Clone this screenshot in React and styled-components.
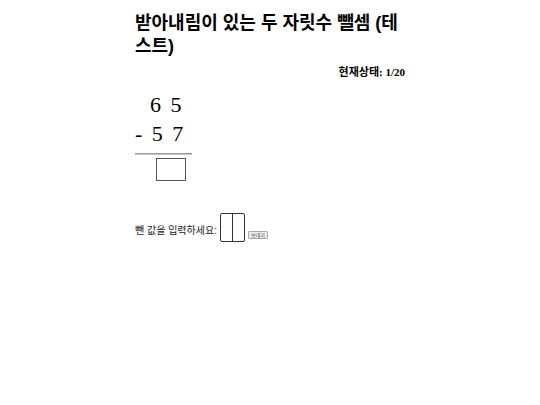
import React from "react";
import styled, { createGlobalStyle } from "styled-components";

const Global = createGlobalStyle`
  html, body { margin: 0; padding: 0; background: #fff; }
  body { font-family: "Liberation Serif", "Noto Sans CJK KR", serif; color: #000; }
`;

const Page = styled.div`
  width: 270px;
  margin: 0 auto;
  padding-top: 12px;
`;

const Title = styled.h1`
  margin: 0;
  font-family: "Liberation Sans", "Noto Sans CJK KR", sans-serif;
  font-size: 18px;
  line-height: 23px;
  font-weight: bold;
`;

const Status = styled.div`
  margin-top: 7px;
  text-align: right;
  font-size: 11px;
  line-height: 14px;
  font-weight: bold;
`;

const Problem = styled.div`
  margin-top: 11px;
  width: 57px;
`;

const NumberRow = styled.div`
  font-family: "Liberation Serif", serif;
  font-size: 22px;
  line-height: 29px;
  letter-spacing: 2px;
  white-space: pre;
`;

const Rule = styled.div`
  margin-top: 5px;
  height: 0;
  border-top: 1px solid #9a9a9a;
  border-bottom: 1px solid #c8c8c8;
`;

const AnswerBox = styled.div`
  margin: 3px 0 0 21px;
  width: 28px;
  height: 21px;
  border: 1px solid #555;
`;

const AnswerRow = styled.div`
  margin-top: 32px;
  display: flex;
  align-items: flex-start;
`;

const Label = styled.span`
  margin-top: 12px;
  font-family: "Liberation Sans", "Noto Sans CJK KR", sans-serif;
  font-size: 10px;
  line-height: 12px;
  color: #222;
`;

const DigitInputs = styled.div`
  margin-left: 3px;
  display: flex;
  border: 1px solid #333;
  border-radius: 2px;
`;

const DigitCell = styled.input`
  width: 11px;
  height: 27px;
  padding: 0;
  margin: 0;
  border: none;
  border-right: ${(p) => (p.$last ? "none" : "1px solid #333")};
  outline: none;
  background: transparent;
  text-align: center;
  font-size: 12px;
`;

const SendButton = styled.button`
  margin: 18px 0 0 3px;
  padding: 0 2px;
  height: 8px;
  font-family: "Liberation Sans", "Noto Sans CJK KR", sans-serif;
  font-size: 5px;
  line-height: 6px;
  color: #333;
  background: #efefef;
  border: 1px solid #aaa;
  border-radius: 1px;
`;

export default function App() {
  return (
    <>
      <Global />
      <Page>
        <Title>받아내림이 있는 두 자릿수 뺄셈 (테스트)</Title>
        <Status>현재상태: 1/20</Status>
        <Problem>
          <NumberRow>{"  6 5"}</NumberRow>
          <NumberRow>{"- 5 7"}</NumberRow>
          <Rule />
          <AnswerBox />
        </Problem>
        <AnswerRow>
          <Label>뺀 값을 입력하세요:</Label>
          <DigitInputs>
            <DigitCell maxLength={1} />
            <DigitCell $last maxLength={1} />
          </DigitInputs>
          <SendButton>보내기</SendButton>
        </AnswerRow>
      </Page>
    </>
  );
}
